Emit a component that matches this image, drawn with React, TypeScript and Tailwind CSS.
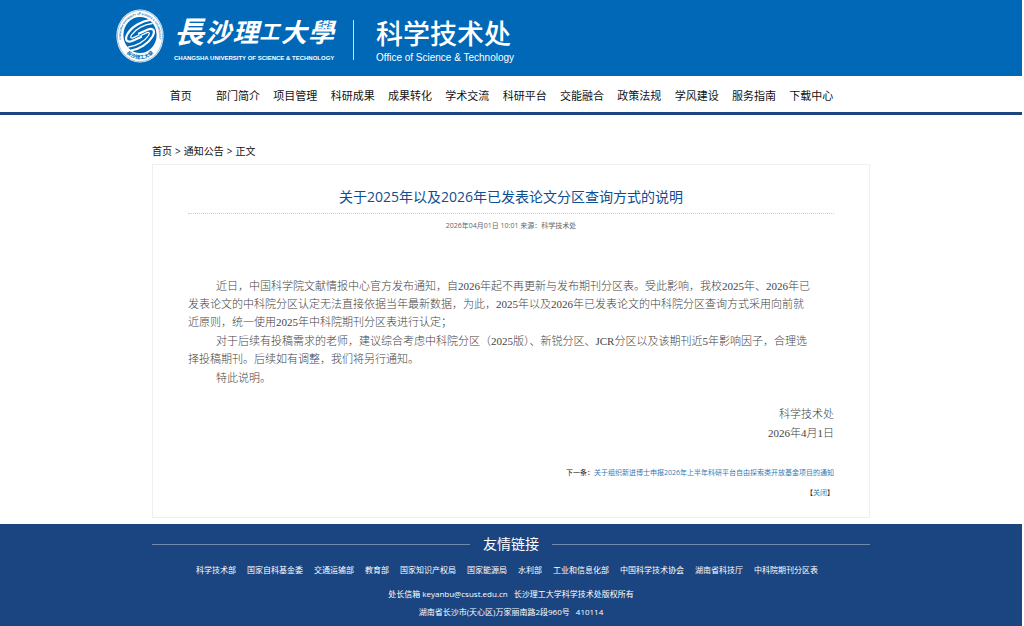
const navItems = [
  "首页",
  "部门简介",
  "项目管理",
  "科研成果",
  "成果转化",
  "学术交流",
  "科研平台",
  "交能融合",
  "政策法规",
  "学风建设",
  "服务指南",
  "下载中心",
];

const friendLinks = [
  "科学技术部",
  "国家自科基金委",
  "交通运输部",
  "教育部",
  "国家知识产权局",
  "国家能源局",
  "水利部",
  "工业和信息化部",
  "中国科学技术协会",
  "湖南省科技厅",
  "中科院期刊分区表",
];

function Emblem() {
  return (
    <svg viewBox="0 0 48 54" className="h-[54px] w-12 shrink-0" aria-hidden="true">
      <defs>
        <path id="ring-top" d="M7.1 37A19.2 21 0 1 1 40.9 37" />
        <path id="ring-bottom" d="M8 41.5A21 24 0 0 0 40 41.5" />
      </defs>
      <ellipse cx="24" cy="27" rx="23.6" ry="26.6" fill="#fff" />
      <ellipse cx="24" cy="27" rx="22.6" ry="25.6" fill="none" stroke="#0068b7" strokeWidth="0.4" />
      <ellipse cx="24" cy="26" rx="16.6" ry="18" fill="#0068b7" />
      <text fontSize="2.6" fontWeight="700" fill="#0068b7" fontFamily="Liberation Sans, sans-serif">
        <textPath href="#ring-top" startOffset="50%" textAnchor="middle">
          CHANGSHA UNIVERSITY OF SCIENCE &amp; TECHNOLOGY
        </textPath>
      </text>
      <text fontSize="5" fontWeight="700" fill="#0068b7" fontFamily="Noto Sans CJK SC, sans-serif">
        <textPath href="#ring-bottom" startOffset="50%" textAnchor="middle">
          長沙理工大學
        </textPath>
      </text>
      <g fill="none" stroke="#fff" strokeLinecap="round" strokeLinejoin="round">
        <path
          d="M34 11C26 12 16 17.5 11.5 25C8.5 30.5 10.5 34 16 32L25 28"
          strokeWidth="2.2"
        />
        <path d="M36 14.5C28 15.5 19.5 20 15.5 26C13.8 28.8 15 29.8 18 28.4L23 26" strokeWidth="1.3" />
        <path
          d="M15 41.5C23 40.5 32 35 36.5 27.5C39.5 22 37.5 18.5 32 20.5L23 24.5"
          strokeWidth="2.2"
        />
        <path d="M12.5 38C20.5 37 28.5 32.5 32.5 26.5C34.2 23.7 33 22.7 30 24.1L25 26.5" strokeWidth="1.3" />
      </g>
    </svg>
  );
}

function Header() {
  return (
    <header className="bg-[#0068b7] text-white">
      <div className="mx-auto flex h-[76px] w-full max-w-[790px] items-center pb-1">
        <Emblem />
        <div className="ml-2.5 flex w-40 flex-col">
          <div className="flex h-11 items-center justify-between text-[26px] leading-none font-bold italic">
            <span className="text-[30px]">長</span>
            <span>沙</span>
            <span>理</span>
            <span className="text-[20px]">工</span>
            <span>大</span>
            <span>學</span>
          </div>
          <p className="font-['Liberation_Sans'] text-[6px] leading-2 font-bold whitespace-nowrap">
            CHANGSHA UNIVERSITY OF SCIENCE &amp; TECHNOLOGY
          </p>
        </div>
        <div className="mt-2 ml-[19px] h-10 w-px bg-white/80" />
        <div className="ml-[22px] pt-2 whitespace-nowrap">
          <p className="text-[27px] leading-9 font-medium">科学技术处</p>
          <p className="font-['Liberation_Sans'] text-[10px] leading-3">
            Office of Science &amp; Technology
          </p>
        </div>
      </div>
    </header>
  );
}

function Nav() {
  return (
    <nav className="border-b-[3px] border-[#1b4580]">
      <ul className="mx-auto grid h-9 w-full max-w-[718px] grid-cols-12 items-center pt-1 pr-[30px] text-center text-[11px] text-[#111]">
        {navItems.map((item) => (
          <li key={item} className="whitespace-nowrap">
            <a href="#">{item}</a>
          </li>
        ))}
      </ul>
    </nav>
  );
}

function Article() {
  return (
    <article className="border border-[#efefef] px-[35px] pb-[14px]">
      <h1 className="border-b border-dotted border-[#ccc] pt-5 pb-1 text-center text-[14px] leading-6 text-[#0d4f91]">
        关于2025年以及2026年已发表论文分区查询方式的说明
      </h1>
      <p className="pt-0.5 text-center text-[7px] leading-5 text-[#666]">
        2026年04月01日 10:01 来源：科学技术处
      </p>
      <div className="mt-[41px] flex flex-col gap-px font-['Liberation_Serif','Noto_Sans_CJK_SC',serif] text-[11px] leading-[18px] font-light text-[#444]">
        <p className="indent-7">
          近日，中国科学院文献情报中心官方发布通知，自2026年起不再更新与发布期刊分区表。受此影响，我校2025年、2026年已
          <br />
          发表论文的中科院分区认定无法直接依据当年最新数据，为此，2025年以及2026年已发表论文的中科院分区查询方式采用向前就
          <br />
          近原则，统一使用2025年中科院期刊分区表进行认定；
        </p>
        <p className="indent-7">
          对于后续有投稿需求的老师，建议综合考虑中科院分区（2025版）、新锐分区、JCR分区以及该期刊近5年影响因子，合理选
          <br />
          择投稿期刊。后续如有调整，我们将另行通知。
        </p>
        <p className="indent-7">特此说明。</p>
        <p className="mt-[17px] text-right">科学技术处</p>
        <p className="text-right">2026年4月1日</p>
      </div>
      <div className="mt-[21px] text-right text-[7px] leading-5 text-[#222]">
        <p>
          下一条：
          <a href="#" className="text-[#337ab7]">
            关于组织新进博士申报2026年上半年科研平台自由探索类开放基金项目的通知
          </a>
        </p>
        <p>
          【
          <a href="#" className="text-[#337ab7]">
            关闭
          </a>
          】
        </p>
      </div>
    </article>
  );
}

function Footer() {
  return (
    <footer className="bg-[#1b4580] pb-[5px] text-white">
      <div className="mx-auto w-full max-w-[718px] pt-2 text-center text-[8px]">
        <div className="flex items-center gap-[13px]">
          <div className="h-px flex-1 bg-[#6f8bb0]" />
          <h2 className="text-[14px] leading-6">友情链接</h2>
          <div className="h-px flex-1 bg-[#6f8bb0]" />
        </div>
        <ul className="mt-1 flex flex-wrap justify-center gap-x-[11px] pr-2 leading-5">
          {friendLinks.map((link) => (
            <li key={link}>
              <a href="#">{link}</a>
            </li>
          ))}
        </ul>
        <p className="mt-[5px] leading-[18px]">
          处长信箱 keyanbu@csust.edu.cn <span className="ml-1">长沙理工大学科学技术处版权所有</span>
        </p>
        <p className="leading-[18px]">
          湖南省长沙市(天心区)万家丽南路2段960号 <span className="ml-1">410114</span>
        </p>
      </div>
    </footer>
  );
}

export default function App() {
  return (
    <div className="bg-white pr-0.5 font-['Open_Sans','Noto_Sans_CJK_SC',sans-serif]" lang="zh-CN">
      <Header />
      <Nav />
      <main className="mx-auto w-full max-w-[718px] pb-1.5">
        <div className="flex gap-[3px] pt-[26px] pb-[3px] text-[10px] leading-5 text-[#111]">
          <a href="#">首页</a>
          <span>&gt;</span>
          <a href="#">通知公告</a>
          <span>&gt;</span>
          <span>正文</span>
        </div>
        <Article />
      </main>
      <Footer />
    </div>
  );
}
